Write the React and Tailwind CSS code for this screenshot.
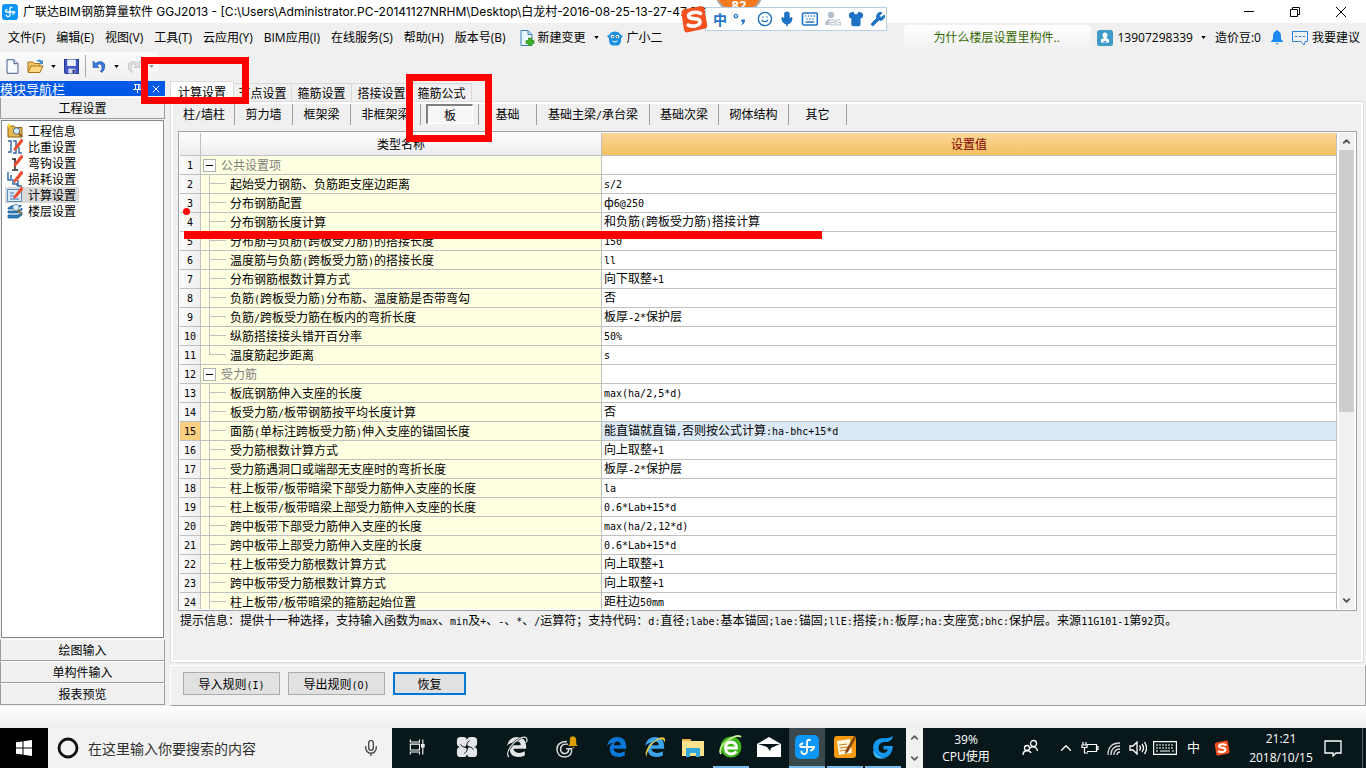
import React from "react";
import { X, Mic, Shirt, Wrench, Keyboard, Smile, ChevronUp, ChevronDown } from "lucide-react";

const UI = "font-['Open_Sans','Noto_Sans_CJK_SC',sans-serif]";
const SONG = "font-['Noto_Sans_CJK_SC',sans-serif]";

/* Half-width runs use a monospaced face at half the ideograph width. */
function Mixed({ text }) {
  return text.split(/([\x20-\x7e]+)/).map((part, i) =>
    i % 2 ? (
      <span key={i} className="font-['DejaVu_Sans_Mono',monospace] text-[10px] leading-none whitespace-pre">{part}</span>
    ) : (
      part
    )
  );
}

function AppLogo({ className }) {
  return (
    <svg viewBox="0 0 24 24" className={className} aria-hidden="true">
      <rect x="0" y="0" width="24" height="24" rx="5" fill="#0d96f6" />
      <g fill="none" stroke="#fff" strokeWidth="1.9" strokeLinecap="round">
        <path d="M15 5.200Q12.500 3.800 12 7v9q-.3 3.300-3.300 3-2.200-.5-2.200-2.500" />
        <path d="M7.500 8.500Q3.500 10 6 12h13" />
        <path d="M19 12q-.5 2.500-3 3.500" />
      </g>
    </svg>
  );
}

function SogouS({ className }) {
  return (
    <svg viewBox="0 0 28 28" className={className} aria-hidden="true">
      <path d="M1.500 8.500Q1 5 4.500 4.300L20 1.200q3.500-.7 4.200 2.500l3 16q.6 3.400-2.800 4L7.800 27.300q-3.200.6-3.800-2.600z" fill="#f4511e" />
      <path d="M20.500 8.500q-4-2-8.500-.7-4 1.500-3.200 3.900.8 1.800 5.700 1.900 5.200.2 5.500 3 .1 3-4.700 4.300-4 .8-7-.8" fill="none" stroke="#fff" strokeWidth="3.600" strokeLinecap="round" />
    </svg>
  );
}

const menus = ["文件(F)", "编辑(E)", "视图(V)", "工具(T)", "云应用(Y)", "BIM应用(I)", "在线服务(S)", "帮助(H)", "版本号(B)"];

function Caret({ className = "text-black" }) {
  return (
    <svg viewBox="0 0 6 4" className={`h-[3px] w-[5px] shrink-0 ${className}`} aria-hidden="true">
      <path d="M0 0h6L3 4z" fill="currentColor" />
    </svg>
  );
}

function TitleBar() {
  return (
    <header className="flex h-[23px] shrink-0 items-center bg-white pl-[2px]">
      <AppLogo className="h-4 w-4 shrink-0" />
      <h1 className="ml-[5px] flex-1 truncate font-['Inter','Noto_Sans_CJK_SC',sans-serif] text-[12px]">
        广联达BIM钢筋算量软件 GGJ2013 - [C:\Users\Administrator.PC-20141127NRHM\Desktop\白龙村-2016-08-25-13-27-47.GGJ12]
      </h1>
      <button aria-label="最小化" className="flex h-5 w-[46px] items-center justify-center"><span className="h-px w-[10px] bg-black" /></button>
      <button aria-label="还原" className="flex h-5 w-[46px] items-center justify-center">
        <svg viewBox="0 0 10 10" className="h-[10px] w-[10px]" fill="none" stroke="#000"><path d="M.5 2.500h7v7h-7zM2.500 2.500v-2h7v7h-2" /></svg>
      </button>
      <button aria-label="关闭" className="mr-[2px] flex h-5 w-[46px] items-center justify-center">
        <svg viewBox="0 0 10 10" className="h-[10px] w-[10px]" stroke="#000"><path d="M0 0l10 10M10 0L0 10" /></svg>
      </button>
    </header>
  );
}

function MenuBar() {
  return (
    <nav className="flex h-[29px] shrink-0 items-center text-[12px] whitespace-nowrap">
      <div className="flex gap-[11px] pl-2">
        {menus.map((m) => (
          <button key={m}>{m}</button>
        ))}
      </div>
      <button className="ml-[13px] flex items-center">
        <svg viewBox="0 0 16 16" className="h-4 w-4" aria-hidden="true">
          <path d="M2 .5h7l4 4v11H2z" fill="#eaf4fc" stroke="#3a7cb8" />
          <path d="M9 .5v4h4" fill="#b7dbf5" stroke="#3a7cb8" />
          <path d="M9.500 8h3v2.500H15v3h-2.500V16h-3v-2.500H7v-3h2.500z" fill="#3fb21f" stroke="#23800e" strokeWidth=".6" />
        </svg>
        <span className="ml-[3px]">新建变更</span>
        <span className="ml-2"><Caret /></span>
      </button>
      <button className="ml-2 flex items-center">
        <svg viewBox="0 0 16 16" className="h-4 w-4" aria-hidden="true">
          <path d="M0 6q3-1 3.500-3Q5 1.500 8 1.500T12.500 3Q13 5 16 6q-1 2-2 2 .5 6-3 7.500H5Q1.500 14 2 8 1 8 0 6z" fill="#1d8fe0" />
          <circle cx="5.500" cy="6.500" r="1.800" fill="#fff" /><circle cx="10.500" cy="6.500" r="1.800" fill="#fff" />
          <circle cx="5.700" cy="6.700" r=".8" fill="#123" /><circle cx="10.300" cy="6.700" r=".8" fill="#123" />
          <path d="M5.500 11q2.500 2 5 0" stroke="#fff" fill="none" />
        </svg>
        <span className="ml-1">广小二</span>
      </button>
      <div className="ml-auto flex h-full items-center">
        <a href="#floor" className="flex h-[26px] w-[187px] items-center rounded bg-gradient-to-b from-white to-[#f0f0f0] pl-[29px] text-[#336600]">为什么楼层设置里构件..</a>
        <button className="ml-[6px] flex items-center">
          <svg viewBox="0 0 16 16" className="h-4 w-4" aria-hidden="true">
            <rect width="16" height="16" rx="2.500" fill="#3f9bc8" />
            <path d="M8 2.500a2.700 2.700 0 0 1 1.300 5q0 1 2.700 2v3H4v-3q2.700-1 2.700-2a2.700 2.700 0 0 1 1.300-5z" fill="#fff" />
            <path d="M6 11l2 1.500 2-1.500" fill="#3f9bc8" />
          </svg>
          <span className="ml-1">13907298339</span>
          <span className="ml-2"><Caret /></span>
        </button>
        <span className="ml-[9px]">造价豆:0</span>
        <button aria-label="通知" className="ml-[10px]">
          <svg viewBox="0 0 12 15" className="h-[15px] w-3" aria-hidden="true">
            <path d="M6 0q1 0 1 1 3 1 3 5v3l2 2.500v.5H0v-.5L2 9V6q0-4 3-5 0-1 1-1zM4.500 13h3L6 14.500z" fill="#1a8af0" />
          </svg>
        </button>
        <button className="mr-[6px] ml-[9px] flex items-center">
          <svg viewBox="0 0 16 16" className="h-4 w-4" fill="none" stroke="#2d83dc" aria-hidden="true">
            <path d="M.5 1.500h15v10h-2.500l-1 3.500-3-3.500H.5z" />
            <path d="M3 6.500h2.500M7 6.500h2.500M11 6.500h2" />
          </svg>
          <span className="ml-1">我要建议</span>
        </button>
      </div>
    </nav>
  );
}

function Toolbar() {
  return (
    <div className="flex h-[28px] shrink-0 items-center self-start rounded bg-gradient-to-b from-[#fbfbfb] to-[#f0f0f0] pr-1 pl-[6px]">
      <button aria-label="新建">
        <svg viewBox="0 0 13 15" className="h-[15px] w-[13px]"><path d="M1 .7h7l4 4v9.600H1z" fill="#f6faff" stroke="#4b5f86" /><path d="M8 .7v4h4" fill="#cbdcf3" stroke="#4b5f86" /></svg>
      </button>
      <button aria-label="打开" className="ml-2 flex items-center">
        <svg viewBox="0 0 18 16" className="h-4 w-[18px]">
          <path d="M1 14V4h5l1.500 1.500H13V8" fill="#f3c463" stroke="#a8741a" />
          <path d="M1 14.500L4 8h12l-3 6.500z" fill="#fbd67e" stroke="#a8741a" />
          <path d="M9 3q3-3 6 0l1-1v4h-4l1.200-1.200Q11.500 3 9 3z" fill="#4b8fd0" />
        </svg>
        <span className="ml-[6px]"><Caret /></span>
      </button>
      <button aria-label="保存" className="ml-2">
        <svg viewBox="0 0 14 14" className="h-[15px] w-[15px]"><path d="M.5.5h13v13h-12l-1-1z" fill="#4058c8" stroke="#2a3a90" /><path d="M3 .5h8v6H3z" fill="#eef3ff" /><path d="M4 9h6.500v4.500H4z" fill="#d4daf0" /><path d="M8 10h2v3.500H8z" fill="#26357c" /></svg>
      </button>
      <span className="mx-[6px] h-[22px] w-px bg-[#a9a9a9]" />
      <button aria-label="撤销" className="flex items-center">
        <svg viewBox="0 0 14 14" className="h-[14px] w-[14px]"><path d="M1 2v6.500h6L5 6.300Q8 4 9.500 6q1.500 3-1 6.500l1.500 1Q14 9.500 12.500 5 9.500.5 3.500 4.300z" fill="#3878d8" stroke="#1d54ac" strokeWidth=".6" /></svg>
        <span className="ml-2"><Caret /></span>
      </button>
      <button aria-label="重做" className="ml-2 flex items-center">
        <svg viewBox="0 0 14 14" className="h-[14px] w-[14px]"><path d="M13 2v6.500H7l2-2.200Q6 4 4.500 6q-1.500 3 1 6.500l-1.500 1Q0 9.500 1.500 5 4.500.5 10.500 4.300z" fill="#dedede" stroke="#b8b8b8" strokeWidth=".6" /></svg>
        <span className="ml-2"><Caret className="text-[#909090]" /></span>
      </button>
    </div>
  );
}

const pen = <path d="M14.500 0L16 2 9.500 10 7 11.500 7.500 9z" fill="#ee4b2b" stroke="#ee4b2b" strokeWidth="1" />;
const navItems = [
  ["工程信息", <><path d="M1 3h6l1 1.500h7V14H1z" fill="#e9b94c" stroke="#8b6414" /><path d="M2 0l1 2 2 .5-2 1L2 6 1 3.500-.5 3 1 2z" fill="#ffd633" /><circle cx="9.500" cy="8" r="3.200" fill="#d5ebfb" stroke="#4a6f98" /><path d="M12 10.500l3 3.500" stroke="#98601c" strokeWidth="2" /></>],
  ["比重设置", <><path d="M1 2h3v11H1M6 2h3v12H6M12 8v6h3" fill="none" stroke="#3466a8" strokeWidth="1.400" />{pen}</>],
  ["弯钩设置", <><path d="M8 4v10M5 15h6M5 4h4" fill="none" stroke="#222" strokeWidth="1.500" />{pen}</>],
  ["损耗设置", <><path d="M1 1v8h3v-5M6 8v5h4v2M11 9v6h4" fill="none" stroke="#3466a8" strokeWidth="1.400" />{pen}</>],
  ["计算设置", <><path d="M.5 2.500h14v12H.5z" fill="#d8e9fa" stroke="#5a8dc8" /><path d="M3 6h4M3 9h4M3 12h9" stroke="#3b72b8" />{pen}</>],
  ["楼层设置", <><path d="M1 5l4-2.500h9.500L11 6H1zM1 8h10l4-3v2l-4 3H1zM1 12h10l4-3v3l-4 3H1z" fill="#2f80bf" stroke="#125a8f" strokeWidth=".7" /><circle cx="9" cy="4.500" r="3.200" fill="#d9effc" stroke="#7796b0" /><path d="M11 7l3 4" stroke="#a87026" strokeWidth="2" /></>],
];

const navBtn = "h-[22px] w-full shrink-0 border border-t-white border-r-[#9d9d9d] border-b-[#9d9d9d] border-l-[#9d9d9d] bg-[#f0f0f0] text-center leading-[20px]";

function Sidebar() {
  return (
    <aside className="flex w-[165px] shrink-0 flex-col">
      <div className="flex h-[15px] shrink-0 items-center bg-[#0058e6] text-[13px] leading-[14px] text-white">
        <span>模块导航栏</span>
        <button aria-label="固定" className="ml-auto">
          <svg viewBox="0 0 9 9" className="h-[9px] w-[9px]" fill="none" stroke="#fff"><path d="M1 .5h6v4.500M2.500.5V5M5.500.5V5M0 5.500h9M4.500 5.500V9" /></svg>
        </button>
        <button aria-label="关闭导航" className="mr-[3px] ml-2"><X className="h-3 w-3" strokeWidth={2} /></button>
      </div>
      <button className={`${navBtn} mt-px`}>工程设置</button>
      <ul className="mx-px mt-px min-h-0 flex-1 border border-[#828790] bg-white pt-[2px] pl-[3px]">
        {navItems.map(([name, icon]) => (
          <li key={name}>
            <button className={`flex h-4 items-center gap-[5px] pr-[3px] pl-[2px] leading-4 ${name === "计算设置" ? "bg-[#d9d9d9]" : ""}`}>
              <svg viewBox="0 0 16 16" className="h-4 w-4" aria-hidden="true">{icon}</svg>
              {name}
            </button>
          </li>
        ))}
      </ul>
      <button className={`${navBtn} mt-px`}>绘图输入</button>
      <button className={navBtn}>单构件输入</button>
      <button className={`${navBtn} mb-px`}>报表预览</button>
    </aside>
  );
}

const subTabs = [
  ["柱/墙柱", "w-[61px]"], ["剪力墙", "w-[58px]"], ["框架梁", "w-[58px]"], ["非框架梁", "w-[70px]"], ["板", "w-[58px]"],
  ["基础", "w-[58px]"], ["基础主梁/承台梁", "w-[113px]"], ["基础次梁", "w-[69px]"], ["砌体结构", "w-[70px]"], ["其它", "w-[58px]"],
];

const rows = [
  ["公共设置项", "", "group"],
  ["起始受力钢筋、负筋距支座边距离", "s/2"],
  ["分布钢筋配置", "ф6@250"],
  ["分布钢筋长度计算", "和负筋(跨板受力筋)搭接计算"],
  ["分布筋与负筋(跨板受力筋)的搭接长度", "150"],
  ["温度筋与负筋(跨板受力筋)的搭接长度", "ll"],
  ["分布钢筋根数计算方式", "向下取整+1"],
  ["负筋(跨板受力筋)分布筋、温度筋是否带弯勾", "否"],
  ["负筋/跨板受力筋在板内的弯折长度", "板厚-2*保护层"],
  ["纵筋搭接接头错开百分率", "50%"],
  ["温度筋起步距离", "s", "last"],
  ["受力筋", "", "group"],
  ["板底钢筋伸入支座的长度", "max(ha/2,5*d)"],
  ["板受力筋/板带钢筋按平均长度计算", "否"],
  ["面筋(单标注跨板受力筋)伸入支座的锚固长度", "能直锚就直锚,否则按公式计算:ha-bhc+15*d"],
  ["受力筋根数计算方式", "向上取整+1"],
  ["受力筋遇洞口或端部无支座时的弯折长度", "板厚-2*保护层"],
  ["柱上板带/板带暗梁下部受力筋伸入支座的长度", "la"],
  ["柱上板带/板带暗梁上部受力筋伸入支座的长度", "0.6*Lab+15*d"],
  ["跨中板带下部受力筋伸入支座的长度", "max(ha/2,12*d)"],
  ["跨中板带上部受力筋伸入支座的长度", "0.6*Lab+15*d"],
  ["柱上板带受力筋根数计算方式", "向上取整+1"],
  ["跨中板带受力筋根数计算方式", "向上取整+1"],
  ["柱上板带/板带暗梁的箍筋起始位置", "距柱边50mm"],
];

const grid = "border-r border-b border-[#c0c0c0] p-0 font-normal";

function SettingsTable() {
  return (
    <div className="ml-1 mr-[3px] flex min-h-0 flex-1 border border-[#a0a4aa] bg-white p-px">
      <div className="min-h-0 flex-1 overflow-hidden">
        <table className="w-full table-fixed border-separate border-spacing-0 leading-[18px]">
          <colgroup><col className="w-[21px]" /><col className="w-[401px]" /><col /></colgroup>
          <thead>
            <tr className="h-[23px]">
              <th className={`${grid} bg-gradient-to-b from-white to-[#ececec]`} aria-label="序号" />
              <th scope="col" className={`${grid} bg-gradient-to-b from-white to-[#ececec]`}>类型名称</th>
              <th scope="col" className={`${grid} bg-gradient-to-b from-[#fad797] to-[#f2c061] text-[#800000]`}>设置值</th>
            </tr>
          </thead>
          <tbody>
            {rows.map(([name, value, kind], i) => (
              <tr key={i} className="h-[19px]">
                <th scope="row" className={`${grid} text-center ${i === 14 ? "bg-[#fbcf80]" : "bg-gradient-to-r from-[#fbfbfb] to-[#efefef]"}`}>
                  <div className="h-[18px] leading-[16px]"><Mixed text={String(i + 1)} /></div>
                </th>
                <td className={`${grid} bg-[#ffffe1]`}>
                  {kind === "group" ? (
                    <div className="flex h-[18px] items-center text-[#808080]">
                      <button aria-label={`折叠${name}`} className="mr-[5px] ml-[2px] flex h-[13px] w-[13px] items-center justify-center border border-[#b0b0b0] bg-white">
                        <span className="h-px w-[7px] bg-black" />
                      </button>
                      {name}
                    </div>
                  ) : (
                    <div className="flex h-[18px] items-center whitespace-nowrap">
                      <span className="mr-1 ml-2 flex h-[18px] w-[17px] shrink-0 flex-col">
                        <span className="h-[9px] border-b border-l border-[#c0c0c0]" />
                        {kind !== "last" && <span className="h-[9px] border-l border-[#c0c0c0]" />}
                      </span>
                      <span><Mixed text={name} /></span>
                    </div>
                  )}
                </td>
                <td className={`${grid} pl-[2px] ${i === 14 ? "bg-[#dce9f6]" : "bg-white"}`}>
                  <div className="h-[18px] leading-[16px] whitespace-nowrap"><Mixed text={value} /></div>
                </td>
              </tr>
            ))}
          </tbody>
        </table>
      </div>
      <div className="ml-[2px] flex w-[15px] shrink-0 flex-col bg-[#f0f0f0]">
        <button aria-label="向上滚动" className="flex h-[17px] items-center justify-center"><ChevronUp className="h-[11px] w-[11px] text-[#505050]" strokeWidth={4} /></button>
        <div className="h-[262px] bg-[#cdcdcd]" />
        <button aria-label="向下滚动" className="mt-auto flex h-[17px] items-center justify-center"><ChevronDown className="h-[11px] w-[11px] text-[#505050]" strokeWidth={4} /></button>
      </div>
      <div className="w-px" />
    </div>
  );
}

function MainPane() {
  const btn = "h-[23px] border border-[#adadad] bg-[#e1e1e1] leading-[20px]";
  return (
    <main className="ml-[5px] flex min-w-0 flex-1 flex-col">
      <div className="flex h-5 shrink-0 items-end">
        <button className="h-5 w-[64px] border border-b-0 border-[#d9d9d9] bg-white leading-[17px]">计算设置</button>
        {["节点设置", "箍筋设置", "搭接设置", "箍筋公式"].map((t, i) => (
          <button key={t} className={`h-[18px] border-t border-r border-[#d9d9d9] leading-[16px] ${i === 0 ? "w-[58px]" : "w-[60px]"}`}>{t}</button>
        ))}
      </div>
      <section className="mr-[2px] flex min-h-0 flex-1 flex-col border border-[#dcdcdc] bg-[#f0f0f0] px-[3px] outline-2 -outline-offset-3 outline-white">
        <div className="flex h-[29px] shrink-0 pt-[2px]">
          {subTabs.map(([t, w]) => (
            <div key={t} className={`${w} flex h-[21px] items-start justify-center border-r border-[#a0a0a0]`}>
              {t === "板" ? (
                <button className="h-[20px] w-[47px] border-t-2 border-r border-b border-l-2 border-t-[#808080] border-r-white border-b-white border-l-[#808080] bg-[#f7f7f7] leading-[17px]">{t}</button>
              ) : (
                <button className="h-[20px] leading-[20px]"><Mixed text={t} /></button>
              )}
            </div>
          ))}
        </div>
        <SettingsTable />
        <p className="h-[51px] shrink-0 pl-[6px] leading-[17px]">
          <Mixed text="提示信息：提供十一种选择，支持输入函数为max、min及+、-、*、/运算符；支持代码：d:直径;labe:基本锚固;lae:锚固;llE:搭接;h:板厚;ha:支座宽;bhc:保护层。来源11G101-1第92页。" />
        </p>
      </section>
      <div className="mt-[2px] flex h-[41px] shrink-0 gap-2 border border-t-white border-r-[#a0a0a0] border-b-[#a0a0a0] border-l-white pt-[6px] pl-3">
        <button className={`${btn} w-[97px]`}><Mixed text="导入规则(I)" /></button>
        <button className={`${btn} w-[97px]`}><Mixed text="导出规则(O)" /></button>
        <button className="h-[23px] w-[73px] border-2 border-[#0078d7] bg-[#e1e1e1] leading-[18px]">恢复</button>
      </div>
    </main>
  );
}

const edgePath = "M1 11Q3 1 12.500 1 22 1.500 22 11v3H8q1 4.500 6 4.500 3.500 0 6.500-1.800v4.500Q17 23 13 23 4 22.500 4 14q0-4.500 4.500-7Q3.500 7.500 1 11zM8.500 10H16q0-4-3.500-4-3.500.3-4 4z";
const taskApps = [
  ["任务视图", <g fill="none" stroke="#fff" strokeWidth="1.300"><path d="M4 3v3h11V3M4 21v-3h11v3M4 8.500h11v7H4z" /><path d="M19 3v18M17.500 9h3v3h-3z" /></g>],
  ["风车", <><g fill="#e4e6e8"><rect x="1" y="1" width="11" height="11" rx="4" /><rect x="12" y="1" width="11" height="11" rx="4" /><rect x="1" y="12" width="11" height="11" rx="4" /><rect x="12" y="12" width="11" height="11" rx="4" /></g><path d="M12 12Q7 13 5 9M12 12Q11 7 15 5M12 12q5-1 7 3M12 12q1 5-3 7" fill="none" stroke="#07171a" strokeWidth="1" /></>],
  ["浏览器", <><path d={edgePath} fill="#e6e6e6" /><path d="M3 23Q-1 18 8 8q10-9 14-6 2 2 0 5" fill="none" stroke="#07171a" strokeWidth="2.600" /><path d="M3 23Q-1 18 8 8q10-9 14-6 2 2 0 5" fill="none" stroke="#e6e6e6" strokeWidth="1.300" /></>],
  ["消息助手", <><g fill="none" stroke="#d9d9d9" strokeWidth="1.600"><path d="M12 6Q1 6 1 15q1 8 9 8 8-1 7-9h-6" /><path d="M13 9q-8-1-8 6 1 5 6 4 3-1 3-5" /></g><path d="M16 1q4-2 6 2v6l2 2H13l2-2V4q0-2 1-3zM17.500 12h3L19 13.500z" fill="#dca000" /></>],
  ["Edge", <path d={edgePath} fill="#0a78d7" />],
  ["IE", <><path d={edgePath} fill="#3da4ec" /><path d="M3 23Q-1 18 8 8q10-9 14-6 2 2 0 5 0-4-4-3.500Q11 5 6 13q-4 7-3 10z" fill="#f5cb3d" /></>],
  ["文件管理", <><path d="M1 4h8l1.500 2H23v15H1z" fill="#ffe08c" /><path d="M1 4h8l1 2H1z" fill="#e8b347" /><path d="M5 22v-9h14v9h-4v-4H9v4z" fill="#34a8dc" /></>],
  ["极速浏览器", <><circle cx="12" cy="12" r="10.500" fill="#41b31c" /><path d="M17.500 16.500Q15 19 12 19q-5.500-.5-5.500-6T12 7q5.500.5 5.500 6H8" fill="none" stroke="#fff" strokeWidth="2.800" /><path d="M2 19Q-1 13 8 6q10-7 14-4" fill="none" stroke="#b9ea8c" strokeWidth="2" /></>, "run"],
  ["邮件", <><path d="M0 9l12-7 12 7v13H0z" fill="#fff" /><path d="M1 9h22l-9 4-1 3-3-4z" fill="#07171a" /></>],
  ["广联达", null, "active"],
  ["记事", <><rect x="1" y="1" width="22" height="22" rx="3" fill="#f39a12" /><path d="M4 6l13-2 2 14-13 2z" fill="#fff6dc" /><path d="M6 10l8-1M7 13l8-1M7 16l6-1" stroke="#c78320" /><path d="M21 1l2 2-8 14-3 2 .5-3.500z" fill="#8a4a10" /></>, "run"],
  ["广联达云", <><path d="M22 1Q17 4 12 3 2 4 2 13q1 9 10 10 9-1 10-12H12.500v3.500H17q-1.500 3.500-5 3.500-4.500-.5-4.500-5.500Q8 7 14 7q7 0 8-6z" fill="#1597ee" /><path d="M2 15q0 7 6 8.500h8Q6 23 2 15z" fill="#48c2ff" /></>, "run"],
];

function Taskbar() {
  const tray = "h-[18px] w-[18px] shrink-0";
  return (
    <footer className={`flex h-10 shrink-0 items-stretch bg-[#07171a] text-[12px] text-white ${UI}`}>
      <button aria-label="开始" className="flex w-12 items-center justify-center bg-black">
        <svg viewBox="0 0 16 16" className="h-4 w-4" fill="#fff"><path d="M0 2.300l6.500-.9v6.100H0zM7.500 1.200L16 0v7.500H7.500zM0 8.500h6.500v6.100L0 13.700zM7.500 8.500H16V16l-8.500-1.200z" /></svg>
      </button>
      <label className="flex w-[344px] items-center bg-[#f2f2f2] pr-3 pl-[9px]">
        <svg viewBox="0 0 22 22" className="h-[22px] w-[22px] shrink-0"><circle cx="11" cy="11" r="9" fill="none" stroke="#111" strokeWidth="2.800" /></svg>
        <input aria-label="搜索" placeholder="在这里输入你要搜索的内容" className="ml-[9px] w-0 flex-1 bg-transparent text-[14px] text-black outline-none placeholder:text-[#303030]" />
        <Mic className="h-[18px] w-[18px] shrink-0 text-[#333]" strokeWidth={1.6} />
      </label>
      <div className="flex items-stretch">
        {taskApps.map(([name, icon, state], i) => (
          <button
            key={name}
            aria-label={name}
            className={`flex items-center justify-center border-b-2 ${i < 4 ? "w-[50px]" : "mx-px w-[36px]"} ${i === 3 ? "mr-[6px]" : ""} ${state ? "border-[#76b9ed]" : "border-transparent"} ${state === "active" ? "bg-[#3a474b]" : ""}`}
          >
            {icon ? <svg viewBox="0 0 24 24" className={i === 0 ? "h-5 w-5" : i < 6 ? "h-[22px] w-[22px]" : "h-6 w-6"} aria-hidden="true">{icon}</svg> : <AppLogo className="h-6 w-6" />}
          </button>
        ))}
      </div>
      <div className="ml-auto flex items-stretch">
        <div className="flex w-[17px] flex-col items-center justify-between bg-[#f0f0f0] py-1 text-[#606060]">
          <ChevronUp className="h-[11px] w-[11px]" strokeWidth={4} />
          <ChevronDown className="h-[11px] w-[11px]" strokeWidth={4} />
        </div>
        <div className="flex w-[86px] flex-col justify-center text-center leading-[17px]"><span>39%</span><span>CPU使用</span></div>
        <div className="flex items-center gap-[6px] pl-3">
          <svg viewBox="0 0 18 18" className={`${tray} mr-3`} fill="none" stroke="#fff" strokeWidth="1.300"><circle cx="6" cy="9" r="2.500" /><path d="M2 16q0-4 4-4.500 3 0 4 2.500" /><circle cx="12.500" cy="4.500" r="3" /><path d="M9 9q3-2 5.500-.500Q16.500 10 16.500 12" /></svg>
          <ChevronUp className={tray} strokeWidth={1.7} />
          <svg viewBox="0 0 18 18" className={tray} fill="none" stroke="#fff" strokeWidth="1.200"><path d="M6 5.500h9.500v7H6M15.500 7.500H17v3h-1.500M2 3v3M5 3v3M1 6h5v2.500H1zM3.500 8.500V14H7" /></svg>
          <svg viewBox="0 0 18 18" className={tray} fill="none" stroke="#d8d8d8" strokeWidth="1.300"><path d="M3 16Q3 4 15 4M6 16Q6 7 15 7M9 16q0-6 6-6M12 16q0-3 3-3" /></svg>
          <svg viewBox="0 0 18 18" className={tray} fill="none" stroke="#fff" strokeWidth="1.300"><path d="M1 7h3l4-4v12l-4-4H1zM10.500 6.500q2 2.500 0 5M13 5q3 4 0 8M15.500 3q4 6 0 12" /></svg>
          <svg viewBox="0 0 24 14" className="h-[14px] w-6" fill="none" stroke="#fff" strokeWidth="1.200"><path d="M.6.6h22.800v12.800H.6z" /><path d="M3 4h18M3 7h18" strokeDasharray="2 1" /><path d="M3 10h2M7 10h10M19 10h2" /></svg>
          <span className="ml-1 text-[13px]">中</span>
          <SogouS className="mr-2 ml-2 h-4 w-4" />
        </div>
        <div className="flex w-[86px] flex-col justify-center text-center leading-[19px]"><span>21:21</span><span>2018/10/15</span></div>
        <button aria-label="操作中心" className="mr-5">
          <svg viewBox="0 0 18 18" className={tray} fill="none" stroke="#fff" strokeWidth="1.300"><path d="M1 2h16v12h-5l-3 3v-3H1z" /></svg>
        </button>
        <span className="mr-[3px] w-px bg-[#5a6466]" />
      </div>
    </footer>
  );
}

function ImeBar() {
  return (
    <div className="absolute top-[5px] left-[680px] flex items-center">
      <SogouS className="relative z-10 -mr-[3px] h-7 w-7" />
      <div className="flex h-6 w-[182px] items-center gap-[6px] border border-[#b7cfe4] bg-white pl-[7px] text-[#1f73c4]">
        <span className="text-[14px] font-bold">中</span>
        <svg viewBox="0 0 14 14" className="h-[14px] w-[14px]"><circle cx="3" cy="4" r="1.700" fill="none" stroke="currentColor" strokeWidth="1.300" /><path d="M8.500 7.500h3.500q.5 4-3 5.500l-.5-.8q1.500-.9 1.300-2.200H8.500z" fill="currentColor" /></svg>
        <Smile className="ml-1 h-4 w-4" strokeWidth={2.2} />
        <Mic className="h-4 w-4" strokeWidth={2.4} fill="currentColor" />
        <Keyboard className="h-[18px] w-[18px]" strokeWidth={2.2} />
        <svg viewBox="0 0 18 16" className="h-4 w-[18px] text-[#b6bfcc]"><circle cx="7" cy="4" r="3.200" fill="currentColor" /><path d="M1 14q0-6 6-6h4v6z" fill="currentColor" /><path d="M6 9h4v2.500H6.500V14H10M16.500 9H12v5h4.500v-2.500h-3" fill="none" stroke="#fff" strokeWidth="2.500" /><path d="M6 9h4v2.500H6.500V14H10M16.500 9H12v5h4.500v-2.500h-3" fill="none" stroke="currentColor" strokeWidth="1.100" /></svg>
        <Shirt className="h-4 w-4" fill="currentColor" />
        <Wrench className="h-4 w-4" fill="currentColor" strokeWidth={1.5} />
      </div>
    </div>
  );
}

export default function App() {
  return (
    <div className={`relative flex h-screen min-h-[480px] flex-col overflow-hidden bg-[#f0f0f0] text-[12px] text-black ${UI}`}>
      <TitleBar />
      <MenuBar />
      <Toolbar />
      <div className={`mt-px flex min-h-0 flex-1 text-[12px] ${SONG}`}>
        <Sidebar />
        <MainPane />
      </div>
      <div className="h-[22px] shrink-0 bg-gradient-to-b from-white to-[#ededed]" />
      <Taskbar />

      <div className="absolute -top-[36px] left-[714px] flex h-[50px] w-[50px] items-end justify-center rounded-full border-2 border-[#a9a9a9] bg-[#f47a1f] text-[13px] leading-[13px] font-bold text-white">82</div>
      <ImeBar />
      <div className="pointer-events-none absolute top-[57px] left-[141px] h-[47px] w-[108px] border-[7px] border-[#fe0000]" />
      <div className="pointer-events-none absolute top-[74px] left-[406px] h-[68px] w-[86px] border-[7px] border-[#fe0000]" />
      <div className="pointer-events-none absolute top-[208px] left-[183px] h-[7px] w-[7px] rounded-full bg-[#fe0000]" />
      <div className="pointer-events-none absolute top-[231px] left-[184px] h-2 w-[638px] bg-[#fe0000]" />
    </div>
  );
}
